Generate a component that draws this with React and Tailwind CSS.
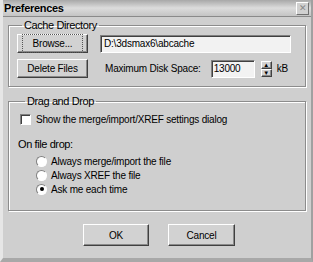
import React from "react";

const raised =
  "border border-t-white border-l-white border-r-[#404040] border-b-[#404040] shadow-[inset_-1px_-1px_0_#8a8a8a]";
const sunken =
  "border border-t-[#808080] border-l-[#808080] border-r-white border-b-white shadow-[inset_1px_1px_0_#404040]";
const etched =
  "border border-[#8c8c8c] shadow-[inset_1px_1px_0_#ffffff,1px_1px_0_#ffffff]";

function Button({ children, className = "", focus = false }) {
  return (
    <button className={`${raised} bg-[#d2d2d2] flex items-center justify-center text-[10px] tracking-[-0.2px] text-black ${className}`}>
      <span className={focus ? "border border-dotted border-[#555] px-[10px] py-[1px]" : ""}>
        {children}
      </span>
    </button>
  );
}

function Radio({ checked, label }) {
  return (
    <div className="flex items-center gap-[4px] h-[14px]">
      <span className="w-[11px] h-[11px] rounded-full bg-white border border-t-[#808080] border-l-[#808080] border-r-white border-b-white flex items-center justify-center">
        {checked && <span className="w-[4px] h-[4px] rounded-full bg-black" />}
      </span>
      <span>{label}</span>
    </div>
  );
}

export default function App() {
  return (
    <div
      className="w-[313px] h-[262px] bg-[#cfcfcf] text-[10px] tracking-[-0.2px] text-black flex flex-col border-l-[3px] border-r-[2px] border-b-[4px] border-l-[#e6e6e6] border-r-[#a0a0a0] border-b-[#a8a8a8]"
      style={{ fontFamily: '"Liberation Sans", Arial, sans-serif' }}
    >
      {/* title bar */}
      <div className="h-[17px] shrink-0 flex items-center justify-between pl-[1px] pr-[2px] bg-gradient-to-b from-[#a8a8a8] via-[#dcdcdc] to-[#c4c4c4] border-b border-[#8a8a8a]">
        <span className="font-bold text-[11px] tracking-[-0.3px]">Preferences</span>
        <span className="w-[13px] h-[13px] bg-[#d0d0d0] border border-t-white border-l-white border-r-[#707070] border-b-[#707070] flex items-center justify-center text-[9px] leading-none text-[#888]">
          ✕
        </span>
      </div>

      <div className="flex-1 flex flex-col px-[5px] pt-[2px]">
        {/* cache directory */}
        <fieldset className={`${etched} h-[68px] px-[8px]`}>
          <legend className="ml-[5px] px-[2px] leading-[13px] text-[11px] tracking-[-0.4px]">Cache Directory</legend>
          <div className="flex flex-col gap-[6px] pt-[2px]">
            <div className="flex items-center">
              <Button focus className="w-[71px] h-[19px]">Browse...</Button>
              <div className={`${sunken} bg-[#f2f2f2] w-[191px] h-[18px] ml-[12px] flex items-center px-[3px]`}>
                D:\3dsmax6\abcache
              </div>
            </div>
            <div className="flex items-center">
              <Button className="w-[71px] h-[19px]">Delete Files</Button>
              <span className="ml-[17px] whitespace-nowrap">Maximum Disk Space:</span>
              <div className={`${sunken} bg-[#f2f2f2] w-[44px] h-[18px] ml-[10px] flex items-center px-[2px]`}>
                13000
              </div>
              <div className="ml-[6px] w-[11px] h-[16px] flex flex-col">
                <span className={`${raised} flex-1 flex items-center justify-center text-[6px] leading-none bg-[#d2d2d2]`}>▲</span>
                <span className={`${raised} flex-1 flex items-center justify-center text-[6px] leading-none bg-[#d2d2d2]`}>▼</span>
              </div>
              <span className="ml-[5px]">kB</span>
            </div>
          </div>
        </fieldset>

        {/* drag and drop */}
        <fieldset className={`${etched} h-[116px] mt-[8px] px-[11px]`}>
          <legend className="ml-[5px] px-[2px] leading-[13px] text-[11px] tracking-[-0.4px]">Drag and Drop</legend>
          <div className="flex flex-col pt-[4px]">
            <div className="flex items-center gap-[5px] h-[14px]">
              <span className={`${sunken} bg-white w-[11px] h-[11px]`} />
              <span>Show the merge/import/XREF settings dialog</span>
            </div>
            <div className="mt-[11px] -ml-[2px] text-[11px] leading-[14px] tracking-[-0.4px]">On file drop:</div>
            <div className="flex flex-col pl-[16px] mt-[3px]">
              <Radio label="Always merge/import the file" />
              <Radio label="Always XREF the file" />
              <Radio checked label="Ask me each time" />
            </div>
          </div>
        </fieldset>

        {/* buttons */}
        <div className="flex gap-[19px] mt-[13px] pl-[75px]">
          <Button className="w-[66px] h-[22px]">OK</Button>
          <Button className="w-[67px] h-[22px]">Cancel</Button>
        </div>
      </div>
    </div>
  );
}
